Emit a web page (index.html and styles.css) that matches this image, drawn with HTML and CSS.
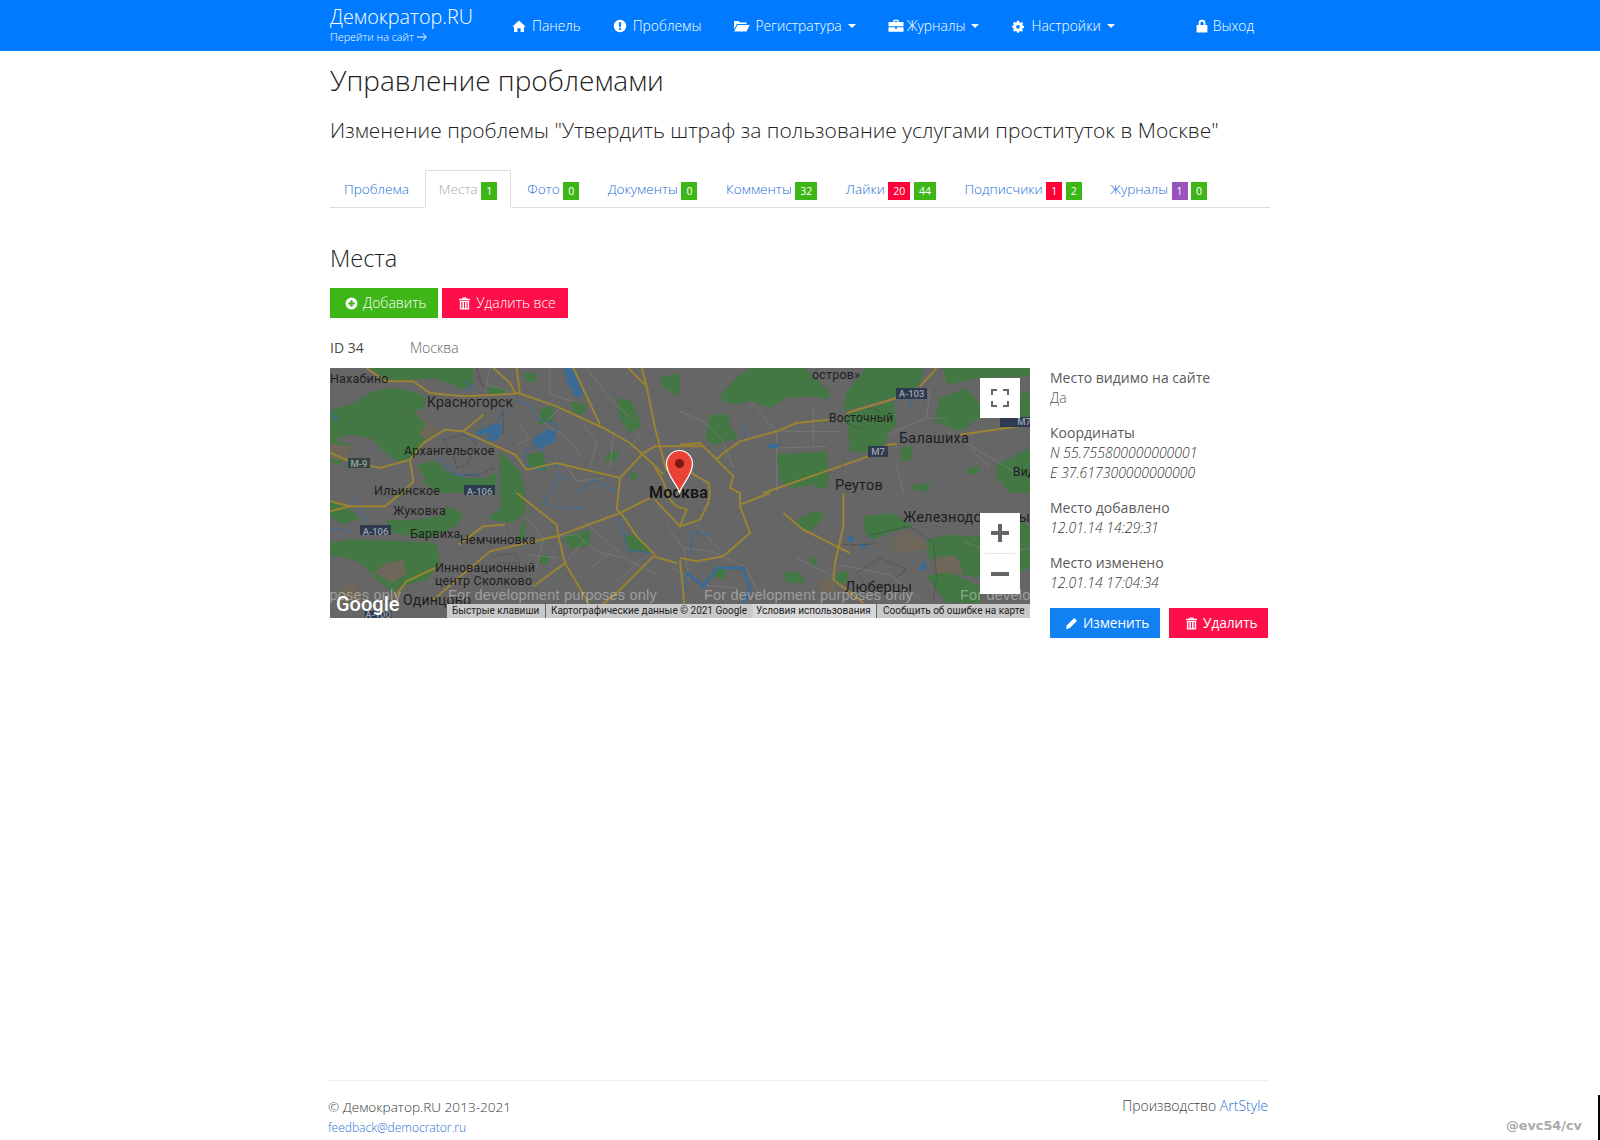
FILE: index.html
```html
<!DOCTYPE html>
<html lang="ru">
<head>
<meta charset="utf-8">
<title>Управление проблемами</title>
<link rel="stylesheet" href="styles.css">
</head>
<body>
<header class="navbar">
  <div class="navbar-inner">
    <div class="brand">
      <a class="brand-name">Демократор.RU</a>
      <a class="brand-sub">Перейти на сайт<svg class="brand-arrow" viewBox="0 0 10 10"><path d="M0 5H9M5.500 1 9.300 5 5.500 9"/></svg></a>
    </div>
    <nav class="nav-main">
      <a class="nav-item"><svg class="nav-icon" viewBox="0 0 14 14"><path d="M7 1.500 13.800 7.800H12V13H8.600V9.200H5.400V13H2V7.800H.2Z"/></svg>Панель</a>
      <a class="nav-item"><svg class="nav-icon" viewBox="0 0 14 14"><path fill-rule="evenodd" d="M7 .8a6.200 6.200 0 1 0 0 12.400A6.200 6.200 0 0 0 7 .8ZM5.800 3.200h2.400L7.800 8.200H6.200ZM5.900 9.200h2.200v1.900H5.900Z"/></svg>Проблемы</a>
      <a class="nav-item"><svg class="nav-icon nav-icon-wide" viewBox="0 0 17 14"><path d="M1 3.200C1 2.500 1.500 2 2.200 2H5.500L7 3.500H13.500V5H3.800L1 10.500ZM4.400 6H16.600L13.600 12.500H1.200Z"/></svg>Регистратура<span class="caret"></span></a>
      <a class="nav-item"><svg class="nav-icon nav-icon-brief" viewBox="0 0 16 14"><path d="M5.200 3V1.600C5.200 1.100 5.600.8 6 .8H10C10.400.8 10.800 1.100 10.800 1.600V3H15.500V7.200H.5V3ZM6.400 3H9.600V2H6.400ZM.5 8.300H7V9.800H9V8.300H15.500V12.800H.5Z"/></svg>Журналы<span class="caret"></span></a>
      <a class="nav-item"><svg class="nav-icon" viewBox="0 0 14 14"><path fill-rule="evenodd" d="M5.800 1H8.200L8.600 2.600 10 3.200 11.400 2.300 13 4 12.100 5.400 12.700 6.800 14 7.200V9.000L12.600 9.400 12 10.800 12.800 12.200 11.200 13.800 9.800 12.900 8.400 13.400 8 15H6L5.600 13.400 4.200 12.800 2.800 13.700 1.200 12 2.100 10.600 1.500 9.200 0 8.800V7.200L1.500 6.600 2.100 5.200 1.200 3.800 2.800 2.200 4.200 3.100 5.400 2.600ZM7 5.800A2.200 2.200 0 1 0 7 10.200 2.200 2.200 0 0 0 7 5.800Z" transform="translate(1 .9) scale(.86)"/></svg>Настройки<span class="caret"></span></a>
      <a class="nav-item nav-item-end"><svg class="nav-icon nav-icon-lock" viewBox="0 0 14 14"><path fill-rule="evenodd" d="M3.600 6V4.200a3.400 3.400 0 0 1 6.800 0V6H12.400V13.400H1.600V6ZM5.400 6H8.600V4.200a1.600 1.600 0 0 0-3.200 0Z"/></svg>Выход</a>
    </nav>
  </div>
</header>

<main class="page">
  <h1 class="title">Управление проблемами</h1>
  <h2 class="subtitle">Изменение проблемы "Утвердить штраф за пользование услугами проституток в Москве"</h2>

  <ul class="tabs">
    <li class="tab"><a class="tab-link">Проблема</a></li>
    <li class="tab tab-active"><a class="tab-link">Места <span class="badge green">1</span></a></li>
    <li class="tab"><a class="tab-link">Фото <span class="badge green">0</span></a></li>
    <li class="tab"><a class="tab-link">Документы <span class="badge green">0</span></a></li>
    <li class="tab"><a class="tab-link">Комменты <span class="badge green">32</span></a></li>
    <li class="tab"><a class="tab-link">Лайки <span class="badge red">20</span> <span class="badge green">44</span></a></li>
    <li class="tab"><a class="tab-link">Подписчики <span class="badge red">1</span> <span class="badge green">2</span></a></li>
    <li class="tab"><a class="tab-link">Журналы <span class="badge purple">1</span> <span class="badge green">0</span></a></li>
  </ul>

  <h3 class="section-title">Места</h3>

  <div class="actions">
    <a class="btn btn-green"><svg class="btn-icon" viewBox="0 0 14 14"><path fill-rule="evenodd" d="M7 .6a6.400 6.400 0 1 0 0 12.800A6.400 6.400 0 0 0 7 .6ZM5.800 3.500H8.200V5.800H10.500V8.200H8.200V10.500H5.800V8.200H3.500V5.800H5.800Z"/></svg>Добавить</a>
    <a class="btn btn-red"><svg class="btn-icon" viewBox="0 0 14 14"><path fill-rule="evenodd" d="M5 .6H9L9.600 2H12.800V3.400H1.200V2H4.400ZM2 4.200H12V13.400H2ZM3.600 5.400V12.200H4.800V5.400ZM6.400 5.400V12.200H7.600V5.400ZM9.200 5.400V12.200H10.400V5.400Z"/></svg>Удалить все</a>
  </div>

  <div class="place-head">
    <span class="place-id">ID 34</span>
    <span class="place-name">Москва</span>
  </div>

  <div class="place-row">
    <div class="map">
      <!-- tile layer: traced in 3x map units -->
      <svg class="map-svg" viewBox="0 0 2100 750" width="700" height="250">
        <rect class="m-base" width="2100" height="750"/>
        <g class="m-green">
          <path d="M120 0H430V50L390 65 370 50 310 30 250 35 200 40 160 30Z"/>
          <path d="M0 125 60 110 130 70 180 60 250 70 290 90 280 120 250 130 270 150 310 190 280 220 250 270 200 280 160 250 120 210 60 200 0 220Z"/>
          <path d="M260 290 320 280 350 310 400 330 470 330 500 310V375H340L290 340Z"/>
          <path d="M510 250 570 310 585 375V520H560L590 425 510 430Z"/>
          <path d="M580 15H620L615 45 590 40ZM480 50 540 65 500 85 470 75ZM720 100 770 110 760 140 730 135ZM630 125 670 110 670 160 625 170ZM860 90 905 100 935 175 895 195 870 150ZM990 30 1050 15 1050 85 1000 60ZM830 255 870 250 860 280 825 280ZM900 310 930 320 905 345ZM590 260 640 250 650 310 600 300Z"/>
          <path d="M0 210 60 230 30 290 0 280ZM270 340 350 335 400 370 330 375Z"/>
          <path d="M1170 80 1230 20 1260 0H1425L1500 75 1490 95 1450 85 1370 90 1320 120 1260 100 1220 110 1180 100Z"/>
          <path d="M1550 70 1610 0H1780L1770 50 1700 85 1540 130Z"/>
          <path d="M1140 140H1195L1200 175 1225 210 1150 230 1125 210Z"/>
          <path d="M1340 260 1490 250 1495 330 1450 350 1390 360 1350 340Z"/>
          <path d="M1545 140 1690 100 1700 170 1675 195 1670 225 1610 255 1560 250 1555 190Z"/>
          <path d="M1830 90 1910 60 1950 110 1950 150 1890 190 1810 160Z"/>
          <path d="M1840 0H2100V25L1950 30 1850 50Z"/>
          <path d="M2000 290 2100 240V375H2040L2000 330Z"/>
          <path d="M1910 300 1950 295 1945 315 1910 320ZM1710 240 1750 235 1740 280 1715 280ZM1745 350 1800 345 1795 370 1750 365ZM1450 330 1495 330 1490 360 1455 360ZM2020 90 2100 70V150L2030 170Z"/>
          <path d="M130 515 320 525 330 585 290 635 210 655 190 675 140 635 90 585 30 565 0 565V525L60 515Z"/>
          <path d="M250 505 290 515 380 475 400 435 350 415 330 445 260 455 170 455 180 495Z"/>
          <path d="M0 400 60 425 90 450 40 470 0 445Z"/>
          <path d="M520 385 590 425 560 460 530 465 470 450 530 410Z"/>
          <path d="M700 505 780 485 780 535 720 540ZM885 505 920 500 960 550 900 550ZM630 560 660 560 650 590 630 585Z"/>
          <path d="M1390 465 1450 430 1485 435 1450 485 1420 485Z"/>
          <path d="M1600 445 1690 435 1750 475 1675 495 1630 515 1605 495Z"/>
          <path d="M1790 515 1850 500 1950 505 2080 460 2100 480V600L2000 640 1900 620 1840 610 1790 560Z"/>
          <path d="M1160 595 1190 605 1180 635 1150 625ZM1360 615 1400 610 1430 645 1370 645ZM1440 565 1465 570 1460 590 1440 590ZM1520 615 1555 610 1550 645 1520 645Z"/>
          <path d="M1790 625 1850 610 1950 655 1950 705 1850 705Z"/>
        </g>
        <g class="m-beige">
          <path d="M0 225 60 235 50 280 0 270ZM290 160 330 190 300 225 270 200Z"/>
          <path d="M170 585 220 575 230 615 190 645 130 615Z"/>
          <path d="M1680 525 1730 485 1780 515 1800 545 1750 545 1700 555Z"/>
          <path d="M1820 565 1880 565 1900 615 1820 615 1810 590Z"/>
          <path d="M1465 635 1510 630 1520 675 1470 675Z"/>
          <path d="M20 670 70 640 100 700 30 720Z"/>
        </g>
        <g class="m-minor">
          <path d="M560 160 600 210 560 230M600 120 660 180 700 200 760 270M690 120 640 170M760 170 800 220 780 300M850 200 840 300M900 240 930 200M700 280 740 340 820 330M480 0 470 50 540 70M660 0V80L730 100M770 0 830 80 900 150"/>
          <path d="M1260 100 1340 190V375M1340 190H1530M1350 240 1490 235M1450 120V230M1670 200 1790 150 1800 60M1790 150 1850 150M1850 190 2050 310M1050 130 1120 160 1180 220 1210 300M1040 230 1100 330M1700 290 1720 375M1920 240 1980 300"/>
          <path d="M590 450 640 510 620 600M640 510 740 500 800 550 880 570M760 460 830 520 900 580 980 620M700 590 760 520M780 600 850 550M600 560 680 570M860 640 950 560M1010 470 1060 540 1150 550 1250 600 1290 690M1060 540 1080 640M1100 470 1170 550M1030 600 1120 650 1220 660"/>
          <path d="M1520 590 1680 620 1780 700M1680 620 1760 690M1400 570 1500 620M1900 520 2000 560 2100 540"/>
        </g>
        <g class="m-water">
          <path d="M560 100 600 110 620 150 680 170 675 200"/>
          <path d="M590 240 580 290 620 305 670 290 690 290M590 240H640V255"/>
          <path d="M330 270 370 320H450M500 215H420M520 130 500 165M660 370 690 320 720 340M740 375 790 335 860 370"/>
          <path d="M400 40 430 60 400 70M660 375 640 405 690 420 760 420M860 425 885 505 890 545 960 555M0 130 20 160"/>
          <path d="M70 395 90 430 110 460M0 480 60 490"/>
          <path d="M1240 220 1250 170M1750 130 1740 90M1720 190V220M2050 300 2070 320"/>
          <path class="m-river" d="M1070 615 1120 655 1160 600H1240L1260 665 1240 705"/>
          <path d="M1070 615 1060 700M1080 560 1090 490 1140 500"/>
        </g>
        <g class="m-lake">
          <path d="M700 0H730L760 80 740 90 715 50ZM610 210 650 185 680 190 670 225 630 240 610 230ZM440 190 500 165 520 175 505 215 480 220 470 195 445 205Z"/>
          <path d="M1550 505H1570L1575 525 1555 520ZM1590 525 1610 530 1605 540 1590 540ZM1775 585 1790 580 1785 605 1765 610ZM10 140 25 150 15 160ZM1315 228 1350 228 1340 240 1315 240Z"/>
        </g>
        <g class="m-dot">
          <path d="M440 0 460 55 440 20M340 215 400 200 440 225 410 290 380 300 370 260 340 215M490 300 440 325 400 320M520 130V200M1550 130 1620 120 1650 130M1550 165 1600 185"/>
          <path d="M490 565 550 555 570 585 500 585M1540 530H1610L1640 525M1610 505 1690 485 1740 475 1810 525 1820 625 1810 695M1580 615 1650 570 1730 605 1670 650 1610 660 1580 615"/>
        </g>
        <g class="m-road">
          <path d="M110 0 165 40H250L300 75 400 85 545 78 565 75"/>
          <path d="M565 75 680 115 820 180 900 225 960 280 1000 320"/>
          <path d="M490 0 540 45 555 75M560 0 570 80"/>
          <path d="M460 140 400 190 345 185 280 225 240 275 150 300 60 280 0 255"/>
          <path d="M400 190 510 240 555 260 590 305 680 285 870 330 940 255 975 235H1120"/>
          <path d="M240 275 250 340 215 375 165 415 60 415 0 400"/>
          <path d="M730 0 810 170M895 0 950 55 975 180 1010 310M935 0 950 55"/>
          <path d="M870 330 860 425 880 445 920 505 975 560"/>
          <path d="M560 375 680 470 685 505 705 585 770 695 790 750"/>
          <path d="M960 390 870 435 680 505 545 535 480 550 380 635 310 695"/>
          <path d="M385 530 460 475 525 470"/>
          <path d="M315 600 230 640 195 685M705 585 610 655"/>
          <path d="M1040 585 970 565 860 675 800 725"/>
          <path d="M0 430 60 415"/>
          <path d="M1770 55 1820 0"/>
          <path d="M1700 90 1550 135"/>
          <path d="M1495 155 1400 165 1340 190 1230 220 1180 255 1160 275 1110 225 1050 230"/>
          <path d="M1160 275 1210 325 1200 360 1230 375 1230 415 1260 495 1180 565 1100 580 1050 570"/>
          <path d="M1320 375 1230 410"/>
          <path d="M1300 375 1545 290 1615 265 1675 230 1700 228M1890 200 2100 170"/>
          <path d="M1075 310 1135 345 1140 375 1135 405 1110 455 1050 475"/>
          <path d="M1360 435 1420 485 1560 555"/>
          <path d="M1540 375V475L1515 585 1510 635 1600 705"/>
          <path d="M1050 575 1060 675 1065 750"/>
          <path d="M975 300 1000 340 1020 395 1040 415 1070 425 1050 475 975 395"/>
        </g>
        <g class="m-rail">
          <path d="M510 240V375L545 535 610 635 630 705"/>
          <path d="M1415 0 1500 70 1535 130 1540 375"/>
        </g>
        <rect class="m-shield-m" x="54" y="270" width="66" height="30"/>
        <rect class="m-shield" x="402" y="351" width="93" height="30"/>
        <rect class="m-shield" x="90" y="471" width="93" height="30"/>
        <rect class="m-shield" x="1698" y="60" width="93" height="33"/>
        <rect class="m-shield" x="1614" y="234" width="60" height="33"/>
        <rect class="m-shield" x="2010" y="147" width="90" height="30"/>
        <rect class="m-shield" x="104" y="729" width="80" height="21"/>
      </svg>
      <svg class="map-top" viewBox="0 0 700 250" width="700" height="250">
        <g class="m-shield-text">
          <text x="29" y="98.500">M-9</text>
          <text x="149.500" y="126.500">A-106</text>
          <text x="45.500" y="166.500">A-106</text>
          <text x="581.500" y="29">A-103</text>
          <text x="548" y="87">M7</text>
          <text x="694" y="57">M7</text>
          <text x="48" y="250">A-100</text>
        </g>
        <g class="m-label">
          <text x="0" y="15">Нахабино</text>
          <text class="m-l14" x="97" y="39">Красногорск</text>
          <text x="74" y="87">Архангельское</text>
          <text x="44" y="127">Ильинское</text>
          <text x="63" y="147">Жуковка</text>
          <text x="80" y="170">Барвиха</text>
          <text x="130" y="176">Немчиновка</text>
          <text x="105" y="204">Инновационный</text>
          <text x="105" y="217">центр Сколково</text>
          <text class="m-l14" x="73" y="237">Одинцово</text>
          <text class="m-l15" x="505" y="122">Реутов</text>
          <text class="m-l15" x="569" y="75">Балашиха</text>
          <text class="m-l12" x="499" y="54">Восточный</text>
          <text class="m-l12" x="683" y="108">Вид</text>
          <text class="m-l15" x="573" y="154">Железнодорожный</text>
          <text class="m-l15" x="515" y="224">Люберцы</text>
          <text x="482" y="11">остров»</text>
          <text class="m-city" x="319" y="130">Москва</text>
        </g>
        <path class="m-pin" d="M349.500 125C347.500 116 336.500 108 336.500 95.500A13 13 0 0 1 362.500 95.500C362.500 108 351.500 116 349.500 125Z"/>
        <circle class="m-pin-dot" cx="349.500" cy="95.500" r="4.500"/>
        <g class="m-dev">
          <text x="-138" y="232">For development purposes only</text>
          <text x="118" y="232">For development purposes only</text>
          <text x="374" y="232">For development purposes only</text>
          <text x="630" y="232">For development purposes only</text>
        </g>
        <text class="m-google" x="6" y="243">Google</text>
      </svg>
      <div class="map-attr">
        <span class="attr-item attr-keys">Быстрые клавиши</span>
        <span class="attr-item attr-data">Картографические данные © 2021 Google</span>
        <span class="attr-item attr-terms">Условия использования</span>
        <span class="attr-item attr-report">Сообщить об ошибке на карте</span>
      </div>
      <button class="map-ctl map-full" aria-label="Полный экран">
        <svg viewBox="0 0 18 18" width="18" height="18"><path class="ctl-stroke" d="M1 6V1H6M12 1H17V6M17 12V17H12M6 17H1V12"/></svg>
      </button>
      <div class="map-ctl map-zoom">
        <div class="zoom-btn"><svg viewBox="0 0 18 18" width="18" height="18"><path class="ctl-fill" d="M7 0H11V7H18V11H11V18H7V11H0V7H7Z"/></svg></div>
        <div class="zoom-sep"></div>
        <div class="zoom-btn"><svg viewBox="0 0 18 18" width="18" height="18"><path class="ctl-fill" d="M0 7H18V11H0Z"/></svg></div>
      </div>
    </div>

    <aside class="info">
      <p class="info-block">Место видимо на сайте<br><span class="info-light">Да</span></p>
      <p class="info-block">Координаты<br><em>N 55.755800000000001</em><br><em>E 37.617300000000000</em></p>
      <p class="info-block">Место добавлено<br><em>12.01.14 14:29:31</em></p>
      <p class="info-block">Место изменено<br><em>12.01.14 17:04:34</em></p>
      <div class="info-actions">
        <a class="btn btn-blue"><svg class="btn-icon" viewBox="0 0 14 14"><path d="M10 1 13 4 5 12 1 13 2 9Z"/></svg>Изменить</a>
        <a class="btn btn-red btn-del"><svg class="btn-icon" viewBox="0 0 14 14"><path fill-rule="evenodd" d="M5 .6H9L9.600 2H12.800V3.400H1.200V2H4.400ZM2 4.200H12V13.400H2ZM3.600 5.400V12.200H4.800V5.400ZM6.400 5.400V12.200H7.600V5.400ZM9.200 5.400V12.200H10.400V5.400Z"/></svg>Удалить</a>
      </div>
    </aside>
  </div>
</main>

<footer class="footer">
  <div class="footer-left">
    <div>© Демократор.RU 2013-2021</div>
    <a class="footer-mail">feedback@democrator.ru</a>
  </div>
  <div class="footer-right">Производство <a class="footer-link">ArtStyle</a></div>
</footer>

<div class="watermark">@evc54/cv</div>
<div class="edge-bar"></div>
</body>
</html>
```
FILE: styles.css
```css
* { box-sizing: border-box; }
html, body { margin: 0; padding: 0; }
body {
  position: relative;
  min-height: 1140px;
  display: flex;
  flex-direction: column;
  font-family: "Open Sans", "Liberation Sans", sans-serif;
  font-size: 14px;
  font-weight: 300;
  line-height: 20px;
  color: #373a3c;
  background: #fff;
}
a { text-decoration: none; }

.navbar { background: #007bff; height: 51px; color: #fff; }
.navbar-inner { width: 940px; margin: 0 auto; display: flex; height: 51px; }
.brand { width: 166px; flex: none; display: flex; flex-direction: column; padding-top: 5px; }
.brand-name { font-size: 19.800px; line-height: 24px; }
.brand-sub { display: flex; align-items: center; font-size: 10.800px; line-height: 14px; margin-top: 1px; font-weight: 300; }
.brand-arrow { width: 10px; height: 10px; margin-left: 3px; fill: none; stroke: #fff; stroke-width: 1; }
.nav-main { flex: 1; display: flex; align-items: center; }
.nav-item { display: flex; align-items: center; padding: 0 16px; font-size: 13.850px; height: 49px; }
.nav-item-end { margin-left: auto; }
.nav-icon { width: 14px; height: 14px; margin-right: 6px; fill: #fff; flex: none; }
.nav-icon-wide { width: 17px; margin-right: 5px; }
.nav-icon-brief { width: 16px; margin-right: 3px; }
.nav-icon-lock { margin-right: 4px; }
.caret { width: 0; height: 0; margin-left: 6px; border-top: 4px solid #fff; border-left: 4px solid transparent; border-right: 4px solid transparent; }

.page { width: 940px; margin: 0 auto; }
.title { margin: 0; padding-top: 11px; font-size: 28px; line-height: 36px; font-weight: 300; color: #222; }
.subtitle { margin: 0; padding-top: 17px; font-size: 21px; line-height: 30px; font-weight: 300; color: #222; }

.tabs { list-style: none; margin: 25px 0 0; padding: 0; display: flex; border-bottom: 1px solid #ddd; height: 38px; }
.tab { margin-right: .5px; height: 38px; }
.tab-link { display: block; height: 38px; padding: 9px 14px 0; font-size: 13.600px; color: #1f6fd6; white-space: nowrap; }
.tab-active { margin: 0 2px 0 1.500px; background: #fff; border: 1px solid #ddd; border-bottom-color: #fff; }
.tab-active .tab-link { color: #aaa; padding: 8px 13px 0; }

.badge { display: inline-block; min-width: 16px; height: 18px; padding: 0 5px; font-size: 10.500px; line-height: 18px; font-weight: 400; color: #fff; text-align: center; vertical-align: -1px; }
.green { background: #3fb618; }
.red { background: #ff0039; }
.purple { background: #9954bb; }

.section-title { margin: 35px 0 0; font-size: 23.500px; line-height: 30px; font-weight: 300; color: #222; }

.actions { display: flex; gap: 4px; margin-top: 15px; font-size: 14px; }
.btn { display: flex; align-items: center; height: 30px; padding: 0 12px 0 15px; color: #fff; font-size: 13.600px; }
.actions .btn { font-size: 14px; }
.btn-icon { width: 13px; height: 13px; margin-right: 5px; fill: #fff; flex: none; }
.btn-green { background: #3fb618; }
.btn-red { background: #ff0f4a; padding-left: 16px; }
.btn-blue { background: #1080f2; }

.place-head { display: flex; margin-top: 20px; height: 20px; }
.place-id { width: 80px; font-weight: 400; color: #4a4a4a; }
.place-name { color: #666; }

.place-row { display: flex; gap: 20px; margin-top: 10px; }
.map { position: relative; width: 700px; height: 250px; flex: none; overflow: hidden; background: #666; }
.map-svg { display: block; }
.map-top { position: absolute; left: 0; top: 0; font-family: Roboto, "Liberation Sans", sans-serif; }
.m-base { fill: #666; }
.m-green path { fill: #437743; }
.m-beige path { fill: #6f675a; }
.m-minor path { fill: none; stroke: #7a7a7a; stroke-width: 2.500; }
.m-water path { fill: none; stroke: #3a6b96; stroke-width: 3.500; }
.m-water .m-river { stroke-width: 9; }
.m-lake path { fill: #3a6b96; }
.m-dot path { fill: none; stroke: #3a3a3a; stroke-width: 2.500; stroke-dasharray: 4 5; }
.m-road path { fill: none; stroke: #9a8432; stroke-width: 6; }
.m-rail path { fill: none; stroke: #5d5a40; stroke-width: 2; stroke-dasharray: 5 5; }
.m-shield { fill: #2d3a50; }
.m-shield-m { fill: #36453a; }
.m-shield-text text { font-size: 9.500px; font-weight: 500; fill: #9aa3ad; text-anchor: middle; }
.m-label text { font-size: 12.500px; font-weight: 400; fill: #1e1e1e; letter-spacing: .2px; }
.m-label .m-l14 { font-size: 14px; }
.m-label .m-l15 { font-size: 14.500px; }
.m-label .m-l12 { font-size: 12px; }
.m-label .m-city { font-size: 16px; font-weight: 500; fill: #111; }
.m-pin { fill: #ea4335; stroke: #fff; stroke-width: 1.200; }
.m-pin-dot { fill: #7f1610; }
.m-dev text { font-family: "Liberation Sans", sans-serif; font-size: 14.500px; fill: rgba(255,255,255,.38); letter-spacing: .2px; }
.m-google { font-size: 20px; font-weight: 500; fill: #fff; }

.map-attr { position: absolute; left: 117px; right: 0; bottom: 0; height: 14px; display: flex; font-family: Roboto, "Liberation Sans", sans-serif; font-size: 10px; font-weight: 400; line-height: 14px; color: #222; }
.attr-item { display: block; background: #c9c9c9; white-space: nowrap; overflow: hidden; flex: none; }
.attr-keys { width: 98px; padding-left: 5px; }
.attr-data { width: 207px; margin-left: 1px; padding-left: 5px; }
.attr-terms { width: 123px; padding-left: 3px; background: #d8d8d8; }
.attr-report { width: 154px; margin-left: 1px; padding-left: 6px; }

.map-ctl { position: absolute; right: 10px; background: #fff; border: 0; padding: 0; }
.map-full { top: 10px; width: 40px; height: 40px; display: flex; align-items: center; justify-content: center; }
.map-zoom { top: 145px; width: 40px; height: 81px; }
.zoom-btn { height: 40px; display: flex; align-items: center; justify-content: center; }
.zoom-sep { height: 1px; margin: 0 5px; background: #e6e6e6; }
.ctl-stroke { fill: none; stroke: #666; stroke-width: 2; }
.ctl-fill { fill: #666; }

.info { flex: 1; font-weight: 400; color: #5a5a5a; }
.info-block { margin: 0 0 15px; }
.info-block em { font-weight: 300; color: #333; }
.info-light { font-weight: 300; }
.info-actions { display: flex; gap: 9px; margin-top: 0; }
.btn-blue { width: 110px; }
.btn-del { width: 99px; }

.footer { width: 940px; margin: auto 0 0 328px; height: 60px; border-top: 1px solid #eee; display: flex; justify-content: space-between; padding-top: 15px; }
.footer-left { line-height: 21px; font-size: 13.600px; }
.footer-mail { display: block; font-size: 12px; color: #1f6fd6; }
.footer-right { color: #444; }
.footer-link { color: #1f6fd6; }

.watermark { position: absolute; left: 1506px; top: 1116px; font-family: "DejaVu Sans", sans-serif; font-size: 12.800px; font-weight: 700; color: #aaa; }
.edge-bar { position: absolute; left: 1598px; top: 1095px; width: 2px; height: 45px; background: #000; }
```
